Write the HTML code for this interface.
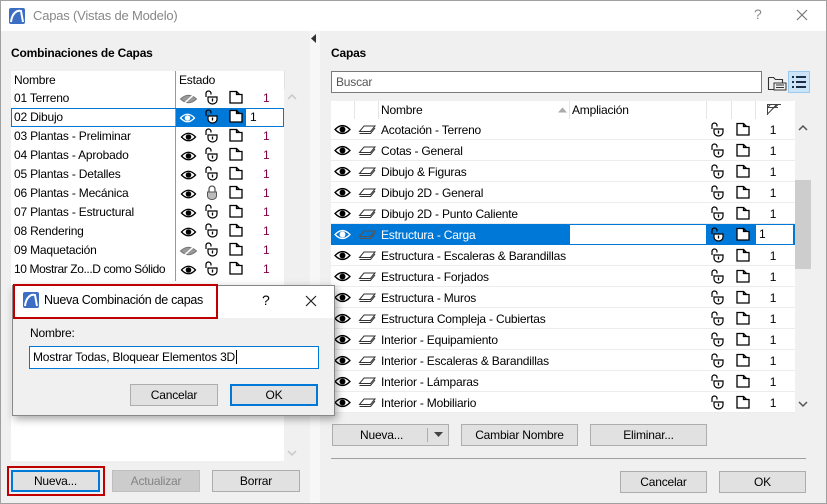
<!DOCTYPE html>
<html><head><meta charset="utf-8"><style>
*{box-sizing:border-box;margin:0;padding:0}
body{width:827px;height:504px;overflow:hidden;font-family:"Liberation Sans",sans-serif;font-size:12px;letter-spacing:-0.2px;color:#000;background:#f0f0f0;position:relative}
.a{position:absolute}
.win{left:0;top:0;width:827px;height:504px;border:1px solid #a0a0a0;background:#f0f0f0}
.title{left:1px;top:1px;width:825px;height:30px;background:#fff}
.btn{position:absolute;background:#e1e1e1;border:1px solid #adadad;text-align:center;line-height:20px;font-size:12px}
.row{position:absolute;height:19px;line-height:19px}
.rrow{position:absolute;left:331px;width:464px;height:21px;line-height:20px;border-bottom:1px solid #ececec;background:#fff}
.num{color:#800040}
svg.i{position:absolute}
</style></head><body>
<svg width="0" height="0" style="position:absolute">
<defs>
<symbol id="eye" viewBox="0 0 16 12"><path d="M1 6 Q8 -1.5 15 6 Q8 13.5 1 6Z" fill="none" stroke="currentColor" stroke-width="1.3"/><circle cx="8" cy="6" r="2.8" fill="currentColor"/></symbol>
<symbol id="eyeoff" viewBox="0 0 18 12"><path d="M1 6 Q9 -1.5 17 6 Q9 13.5 1 6Z" fill="#999" stroke="#777" stroke-width="1"/><path d="M4 11 L15 1" stroke="#fff" stroke-width="1.5"/></symbol>
<symbol id="lock" viewBox="0 0 16 16"><path d="M3 8 V4.5 a2.5 2.5 0 0 1 5 0 V5.5" fill="none" stroke="currentColor" stroke-width="1.2"/><path d="M5 8 h9 v3 a4.5 4 0 0 1 -9 0 z" fill="none" stroke="currentColor" stroke-width="1.2"/><path d="M9.5 9.5 v3" stroke="currentColor" stroke-width="1.3"/></symbol>
<symbol id="lockw" viewBox="0 0 16 16"><path d="M3 8 V4.5 a2.5 2.5 0 0 1 5 0 V5.5" fill="none" stroke="#000" stroke-width="1.2"/><path d="M5 8 h9 v3 a4.5 4 0 0 1 -9 0 z" fill="#fff" stroke="#000" stroke-width="1.2"/><path d="M9.5 9.5 v3" stroke="#000" stroke-width="1.3"/></symbol>
<symbol id="lockc" viewBox="0 0 16 16"><path d="M5 8 V5 a3 3 0 0 1 6 0 V8" fill="none" stroke="#555" stroke-width="1.3"/><path d="M3.5 8 h9 v4 a4.5 3.5 0 0 1 -9 0 z" fill="#bbb" stroke="#555" stroke-width="1"/></symbol>
<symbol id="fold" viewBox="0 0 16 16"><path d="M2 2.5 h6.5 v3 h5.5 v8.5 h-12 z M8.5 2.5 l3 3" fill="none" stroke="currentColor" stroke-width="1.3"/></symbol>
<symbol id="foldw" viewBox="0 0 16 16"><path d="M2 2.5 h6.5 v3 h5.5 v8.5 h-12 z" fill="#fff" stroke="#000" stroke-width="1.3"/><path d="M8.5 2.5 l3 3" fill="none" stroke="#000" stroke-width="1.3"/></symbol>
<symbol id="lay" viewBox="0 0 18 12"><path d="M1.5 7.5 L6 2 H17 L12.5 7.5 Z" fill="none" stroke="currentColor" stroke-width="1"/><path d="M1.5 9.5 H12.5 L17 4" fill="none" stroke="currentColor" stroke-width="1"/></symbol>
<symbol id="logo" viewBox="0 0 16 16"><rect width="16" height="16" rx="2" fill="#3c6fc4"/><path d="M2 14 C3 5 8 2 12 3 L14 14" fill="none" stroke="#fff" stroke-width="2"/></symbol>
</defs></svg>

<div class="a win"></div>
<div class="a title"></div>
<svg class="i" style="left:9px;top:8px" width="16" height="16"><use href="#logo"/></svg>
<div class="a" style="left:33px;top:8px;font-size:13px;color:#888">Capas (Vistas de Modelo)</div>
<div class="a" style="left:754px;top:6px;font-size:14px;color:#888">?</div>
<svg class="i" style="left:796px;top:9px" width="12" height="12"><path d="M1 1 L11 11 M11 1 L1 11" stroke="#777" stroke-width="1.2"/></svg>

<div class="a" style="left:310px;top:31px;width:10px;height:472px;background:#f7f7f7"></div>
<svg class="i" style="left:311px;top:34px" width="6" height="9"><path d="M5 0 L0 4.5 L5 9Z" fill="#333"/></svg>

<!-- LEFT -->
<div class="a" style="left:11px;top:46px;font-weight:bold">Combinaciones de Capas</div>
<div class="a" style="left:11px;top:71px;width:273px;height:390px;background:#fff"></div>
<div class="a" style="left:175px;top:71px;width:1px;height:210px;background:#999"></div>
<div class="a" style="left:284px;top:71px;width:1px;height:18px;background:#e0e0e0"></div>
<div class="a" style="left:14px;top:73px">Nombre</div>
<div class="a" style="left:179px;top:73px">Estado</div>
<svg class="i" style="left:287px;top:93px" width="10" height="7"><path d="M1 6 L5 2 L9 6" fill="none" stroke="#c8c8c8" stroke-width="1.5"/></svg>
<svg class="i" style="left:287px;top:450px" width="10" height="7"><path d="M1 1 L5 5 L9 1" fill="none" stroke="#c8c8c8" stroke-width="1.5"/></svg>

<div class="a" style="left:11px;top:108px;width:273px;height:19px;border:1px solid #0078d7"></div>
<div class="a" style="left:176px;top:109px;width:70px;height:17px;background:#0078d7"></div>

<div class="row" style="left:14px;top:89px">01 Terreno</div>
<div class="row" style="left:14px;top:108px">02 Dibujo</div>
<div class="row" style="left:14px;top:127px">03 Plantas - Preliminar</div>
<div class="row" style="left:14px;top:146px">04 Plantas - Aprobado</div>
<div class="row" style="left:14px;top:165px">05 Plantas - Detalles</div>
<div class="row" style="left:14px;top:184px">06 Plantas - Mecánica</div>
<div class="row" style="left:14px;top:203px">07 Plantas - Estructural</div>
<div class="row" style="left:14px;top:222px">08 Rendering</div>
<div class="row" style="left:14px;top:241px">09 Maquetación</div>
<div class="row" style="left:14px;top:260px;letter-spacing:-0.4px">10 Mostrar Zo...D como Sólido</div>

<svg class="i" style="left:179px;top:93px" width="19" height="12"><use href="#eyeoff"/></svg>
<svg class="i" style="left:179px;top:112px;color:#fff" width="17" height="12"><use href="#eye"/></svg>
<svg class="i" style="left:180px;top:131px;color:#000" width="17" height="12"><use href="#eye"/></svg>
<svg class="i" style="left:180px;top:150px;color:#000" width="17" height="12"><use href="#eye"/></svg>
<svg class="i" style="left:180px;top:169px;color:#000" width="17" height="12"><use href="#eye"/></svg>
<svg class="i" style="left:180px;top:188px;color:#000" width="17" height="12"><use href="#eye"/></svg>
<svg class="i" style="left:180px;top:207px;color:#000" width="17" height="12"><use href="#eye"/></svg>
<svg class="i" style="left:180px;top:226px;color:#000" width="17" height="12"><use href="#eye"/></svg>
<svg class="i" style="left:179px;top:245px" width="19" height="12"><use href="#eyeoff"/></svg>
<svg class="i" style="left:180px;top:264px;color:#000" width="17" height="12"><use href="#eye"/></svg>

<svg class="i" style="left:203px;top:89px;color:#000" width="16" height="16"><use href="#lock"/></svg>
<svg class="i" style="left:203px;top:108px" width="16" height="16"><use href="#lockw"/></svg>
<svg class="i" style="left:203px;top:127px;color:#000" width="16" height="16"><use href="#lock"/></svg>
<svg class="i" style="left:203px;top:146px;color:#000" width="16" height="16"><use href="#lock"/></svg>
<svg class="i" style="left:203px;top:165px;color:#000" width="16" height="16"><use href="#lock"/></svg>
<svg class="i" style="left:204px;top:184px" width="16" height="16"><use href="#lockc"/></svg>
<svg class="i" style="left:203px;top:203px;color:#000" width="16" height="16"><use href="#lock"/></svg>
<svg class="i" style="left:203px;top:222px;color:#000" width="16" height="16"><use href="#lock"/></svg>
<svg class="i" style="left:203px;top:241px;color:#000" width="16" height="16"><use href="#lock"/></svg>
<svg class="i" style="left:203px;top:260px;color:#000" width="16" height="16"><use href="#lock"/></svg>

<svg class="i" style="left:228px;top:89px;color:#000" width="16" height="16"><use href="#fold"/></svg>
<svg class="i" style="left:228px;top:108px" width="16" height="16"><use href="#foldw"/></svg>
<svg class="i" style="left:228px;top:127px;color:#000" width="16" height="16"><use href="#fold"/></svg>
<svg class="i" style="left:228px;top:146px;color:#000" width="16" height="16"><use href="#fold"/></svg>
<svg class="i" style="left:228px;top:165px;color:#000" width="16" height="16"><use href="#fold"/></svg>
<svg class="i" style="left:228px;top:184px;color:#000" width="16" height="16"><use href="#fold"/></svg>
<svg class="i" style="left:228px;top:203px;color:#000" width="16" height="16"><use href="#fold"/></svg>
<svg class="i" style="left:228px;top:222px;color:#000" width="16" height="16"><use href="#fold"/></svg>
<svg class="i" style="left:228px;top:241px;color:#000" width="16" height="16"><use href="#fold"/></svg>
<svg class="i" style="left:228px;top:260px;color:#000" width="16" height="16"><use href="#fold"/></svg>

<div class="row num" style="left:263px;top:89px">1</div>
<div class="row" style="left:250px;top:108px">1</div>
<div class="row num" style="left:263px;top:127px">1</div>
<div class="row num" style="left:263px;top:146px">1</div>
<div class="row num" style="left:263px;top:165px">1</div>
<div class="row num" style="left:263px;top:184px">1</div>
<div class="row num" style="left:263px;top:203px">1</div>
<div class="row num" style="left:263px;top:222px">1</div>
<div class="row num" style="left:263px;top:241px">1</div>
<div class="row num" style="left:263px;top:260px">1</div>

<div class="a" style="left:7px;top:466px;width:98px;height:30px;border:2px solid #c00000"></div>
<div class="btn" style="left:11px;top:470px;width:89px;height:22px;border:2px solid #0078d7;line-height:18px">Nueva...</div>
<div class="btn" style="left:112px;top:470px;width:88px;height:22px;background:#ccc;border-color:#bfbfbf;color:#838383">Actualizar</div>
<div class="btn" style="left:212px;top:470px;width:88px;height:22px">Borrar</div>

<!-- RIGHT -->
<div class="a" style="left:331px;top:46px;font-weight:bold">Capas</div>
<div class="a" style="left:331px;top:71px;width:431px;height:22px;background:#fff;border:1px solid #7a7a7a;padding-left:4px;line-height:20px;color:#555">Buscar</div>
<svg class="i" style="left:767px;top:74px" width="20" height="18"><path d="M1.5 3.5 h5 l2 2 h7 v3 M1.5 3.5 v12 h5" fill="none" stroke="#333" stroke-width="1.1"/><rect x="7" y="9" width="12" height="7" fill="none" stroke="#333"/><path d="M9 11 h8 M9 13.5 h8" stroke="#333"/></svg>
<div class="a" style="left:788px;top:71px;width:22px;height:22px;background:#cce4f7;border:1px solid #99c9ef"></div>
<svg class="i" style="left:791px;top:75px" width="16" height="14"><path d="M1 2h2M5 2h10M1 7h2M5 7h10M1 12h2M5 12h10" stroke="#1e2d44" stroke-width="2"/></svg>

<div class="a" style="left:331px;top:101px;width:464px;height:18px;background:#fff"></div>
<div class="a" style="left:354px;top:101px;width:1px;height:18px;background:#e5e5e5"></div>
<div class="a" style="left:378px;top:101px;width:1px;height:18px;background:#e5e5e5"></div>
<div class="a" style="left:569px;top:101px;width:1px;height:18px;background:#e5e5e5"></div>
<div class="a" style="left:706px;top:101px;width:1px;height:18px;background:#e5e5e5"></div>
<div class="a" style="left:731px;top:101px;width:1px;height:18px;background:#e5e5e5"></div>
<div class="a" style="left:755px;top:101px;width:1px;height:18px;background:#e5e5e5"></div>
<div class="a" style="left:381px;top:103px">Nombre</div>
<svg class="i" style="left:558px;top:107px" width="9" height="6"><path d="M0 5.5 L4.5 0.5 L9 5.5Z" fill="#aaa"/></svg>
<div class="a" style="left:572px;top:103px">Ampliación</div>
<svg class="i" style="left:766px;top:103px" width="16" height="13"><path d="M1.5 12 V1.5 H15 M1.5 4.5 H12 M1.5 4.5 L4.5 1.5 M4.5 8 L10.5 1.5 M9 4.5 L12 1.5 M1.5 11 L8 4.5" fill="none" stroke="#444" stroke-width="1"/></svg>

<div class="rrow" style="top:119px"></div>
<div class="rrow" style="top:140px"></div>
<div class="rrow" style="top:161px"></div>
<div class="rrow" style="top:182px"></div>
<div class="rrow" style="top:203px"></div>
<div class="rrow" style="top:224px;background:#0078d7;border-color:#0078d7"></div>
<div class="rrow" style="top:245px"></div>
<div class="rrow" style="top:266px"></div>
<div class="rrow" style="top:287px"></div>
<div class="rrow" style="top:308px"></div>
<div class="rrow" style="top:329px"></div>
<div class="rrow" style="top:350px"></div>
<div class="rrow" style="top:371px"></div>
<div class="rrow" style="top:392px"></div>
<div class="a" style="left:570px;top:225px;width:136px;height:19px;background:#fff"></div>
<div class="a" style="left:756px;top:225px;width:37px;height:19px;background:#fff"></div>
<div class="a" style="left:759px;top:225px;line-height:19px">1</div>

<div class="a" style="left:381px;top:120px;line-height:20px">
<div style="height:21px">Acotación - Terreno</div>
<div style="height:21px">Cotas - General</div>
<div style="height:21px">Dibujo &amp; Figuras</div>
<div style="height:21px">Dibujo 2D - General</div>
<div style="height:21px">Dibujo 2D - Punto Caliente</div>
<div style="height:21px;color:#fff">Estructura - Carga</div>
<div style="height:21px">Estructura - Escaleras &amp; Barandillas</div>
<div style="height:21px">Estructura - Forjados</div>
<div style="height:21px">Estructura - Muros</div>
<div style="height:21px">Estructura Compleja - Cubiertas</div>
<div style="height:21px">Interior - Equipamiento</div>
<div style="height:21px">Interior - Escaleras &amp; Barandillas</div>
<div style="height:21px">Interior - Lámparas</div>
<div style="height:21px">Interior - Mobiliario</div>
</div>
<div class="a" style="left:768px;top:120px;line-height:20px;text-align:center;width:10px">
<div style="height:21px">1</div><div style="height:21px">1</div><div style="height:21px">1</div><div style="height:21px">1</div><div style="height:21px">1</div><div style="height:21px"></div><div style="height:21px">1</div><div style="height:21px">1</div><div style="height:21px">1</div><div style="height:21px">1</div><div style="height:21px">1</div><div style="height:21px">1</div><div style="height:21px">1</div><div style="height:21px">1</div>
</div>

<div class="a" style="left:334px;top:123px;color:#000">
<svg width="17" height="13" style="display:block;margin-bottom:8px"><use href="#eye"/></svg>
<svg width="17" height="13" style="display:block;margin-bottom:8px"><use href="#eye"/></svg>
<svg width="17" height="13" style="display:block;margin-bottom:8px"><use href="#eye"/></svg>
<svg width="17" height="13" style="display:block;margin-bottom:8px"><use href="#eye"/></svg>
<svg width="17" height="13" style="display:block;margin-bottom:8px"><use href="#eye"/></svg>
<svg width="17" height="13" style="display:block;margin-bottom:8px;color:#fff"><use href="#eye"/></svg>
<svg width="17" height="13" style="display:block;margin-bottom:8px"><use href="#eye"/></svg>
<svg width="17" height="13" style="display:block;margin-bottom:8px"><use href="#eye"/></svg>
<svg width="17" height="13" style="display:block;margin-bottom:8px"><use href="#eye"/></svg>
<svg width="17" height="13" style="display:block;margin-bottom:8px"><use href="#eye"/></svg>
<svg width="17" height="13" style="display:block;margin-bottom:8px"><use href="#eye"/></svg>
<svg width="17" height="13" style="display:block;margin-bottom:8px"><use href="#eye"/></svg>
<svg width="17" height="13" style="display:block;margin-bottom:8px"><use href="#eye"/></svg>
<svg width="17" height="13" style="display:block;margin-bottom:8px"><use href="#eye"/></svg>
</div>
<div class="a" style="left:358px;top:124px;color:#333">
<svg width="18" height="12" style="display:block;margin-bottom:9px"><use href="#lay"/></svg>
<svg width="18" height="12" style="display:block;margin-bottom:9px"><use href="#lay"/></svg>
<svg width="18" height="12" style="display:block;margin-bottom:9px"><use href="#lay"/></svg>
<svg width="18" height="12" style="display:block;margin-bottom:9px"><use href="#lay"/></svg>
<svg width="18" height="12" style="display:block;margin-bottom:9px"><use href="#lay"/></svg>
<svg width="18" height="12" style="display:block;margin-bottom:9px;color:#555"><use href="#lay"/></svg>
<svg width="18" height="12" style="display:block;margin-bottom:9px"><use href="#lay"/></svg>
<svg width="18" height="12" style="display:block;margin-bottom:9px"><use href="#lay"/></svg>
<svg width="18" height="12" style="display:block;margin-bottom:9px"><use href="#lay"/></svg>
<svg width="18" height="12" style="display:block;margin-bottom:9px"><use href="#lay"/></svg>
<svg width="18" height="12" style="display:block;margin-bottom:9px"><use href="#lay"/></svg>
<svg width="18" height="12" style="display:block;margin-bottom:9px"><use href="#lay"/></svg>
<svg width="18" height="12" style="display:block;margin-bottom:9px"><use href="#lay"/></svg>
<svg width="18" height="12" style="display:block;margin-bottom:9px"><use href="#lay"/></svg>
</div>
<div class="a" style="left:709px;top:121px;color:#000">
<svg width="16" height="16" style="display:block;margin-bottom:5px"><use href="#lock"/></svg>
<svg width="16" height="16" style="display:block;margin-bottom:5px"><use href="#lock"/></svg>
<svg width="16" height="16" style="display:block;margin-bottom:5px"><use href="#lock"/></svg>
<svg width="16" height="16" style="display:block;margin-bottom:5px"><use href="#lock"/></svg>
<svg width="16" height="16" style="display:block;margin-bottom:5px"><use href="#lock"/></svg>
<svg width="16" height="16" style="display:block;margin-bottom:5px"><use href="#lockw"/></svg>
<svg width="16" height="16" style="display:block;margin-bottom:5px"><use href="#lock"/></svg>
<svg width="16" height="16" style="display:block;margin-bottom:5px"><use href="#lock"/></svg>
<svg width="16" height="16" style="display:block;margin-bottom:5px"><use href="#lock"/></svg>
<svg width="16" height="16" style="display:block;margin-bottom:5px"><use href="#lock"/></svg>
<svg width="16" height="16" style="display:block;margin-bottom:5px"><use href="#lock"/></svg>
<svg width="16" height="16" style="display:block;margin-bottom:5px"><use href="#lock"/></svg>
<svg width="16" height="16" style="display:block;margin-bottom:5px"><use href="#lock"/></svg>
<svg width="16" height="16" style="display:block;margin-bottom:5px"><use href="#lock"/></svg>
</div>
<div class="a" style="left:735px;top:121px;color:#000">
<svg width="16" height="16" style="display:block;margin-bottom:5px"><use href="#fold"/></svg>
<svg width="16" height="16" style="display:block;margin-bottom:5px"><use href="#fold"/></svg>
<svg width="16" height="16" style="display:block;margin-bottom:5px"><use href="#fold"/></svg>
<svg width="16" height="16" style="display:block;margin-bottom:5px"><use href="#fold"/></svg>
<svg width="16" height="16" style="display:block;margin-bottom:5px"><use href="#fold"/></svg>
<svg width="16" height="16" style="display:block;margin-bottom:5px"><use href="#foldw"/></svg>
<svg width="16" height="16" style="display:block;margin-bottom:5px"><use href="#fold"/></svg>
<svg width="16" height="16" style="display:block;margin-bottom:5px"><use href="#fold"/></svg>
<svg width="16" height="16" style="display:block;margin-bottom:5px"><use href="#fold"/></svg>
<svg width="16" height="16" style="display:block;margin-bottom:5px"><use href="#fold"/></svg>
<svg width="16" height="16" style="display:block;margin-bottom:5px"><use href="#fold"/></svg>
<svg width="16" height="16" style="display:block;margin-bottom:5px"><use href="#fold"/></svg>
<svg width="16" height="16" style="display:block;margin-bottom:5px"><use href="#fold"/></svg>
<svg width="16" height="16" style="display:block;margin-bottom:5px"><use href="#fold"/></svg>
</div>

<div class="a" style="left:795px;top:180px;width:16px;height:89px;background:#cdcdcd"></div>
<svg class="i" style="left:798px;top:124px" width="10" height="7"><path d="M1 6 L5 2 L9 6" fill="none" stroke="#555" stroke-width="1.5"/></svg>
<svg class="i" style="left:798px;top:401px" width="10" height="7"><path d="M1 1 L5 5 L9 1" fill="none" stroke="#555" stroke-width="1.5"/></svg>

<div class="btn" style="left:332px;top:424px;width:117px;height:22px;text-align:left;padding-left:27px">Nueva...</div>
<div class="a" style="left:427px;top:428px;width:1px;height:14px;background:#adadad"></div>
<svg class="i" style="left:434px;top:432px" width="9" height="5"><path d="M0 0 H9 L4.5 5Z" fill="#444"/></svg>
<div class="btn" style="left:461px;top:424px;width:117px;height:22px">Cambiar Nombre</div>
<div class="btn" style="left:590px;top:424px;width:117px;height:22px">Eliminar...</div>
<div class="a" style="left:331px;top:458px;width:475px;height:1px;background:#a0a0a0"></div>
<div class="btn" style="left:620px;top:471px;width:87px;height:22px">Cancelar</div>
<div class="btn" style="left:719px;top:471px;width:87px;height:22px">OK</div>

<!-- DIALOG -->
<div class="a" style="left:12px;top:285px;width:323px;height:131px;background:#f0f0f0;border:1px solid #888;box-shadow:2px 3px 8px rgba(0,0,0,.35)"></div>
<div class="a" style="left:13px;top:286px;width:321px;height:32px;background:#fff"></div>
<div class="a" style="left:13px;top:284px;width:205px;height:35px;border:2px solid #c00000"></div>
<svg class="i" style="left:23px;top:292px" width="16" height="16"><use href="#logo"/></svg>
<div class="a" style="left:44px;top:293px;font-size:12.5px;letter-spacing:-0.3px">Nueva Combinación de capas</div>
<div class="a" style="left:262px;top:292px;font-size:14px">?</div>
<svg class="i" style="left:305px;top:295px" width="12" height="12"><path d="M1 1 L11 11 M11 1 L1 11" stroke="#222" stroke-width="1.2"/></svg>
<div class="a" style="left:30px;top:326px">Nombre:</div>
<div class="a" style="left:29px;top:346px;width:290px;height:23px;background:#fff;border:1px solid #0078d7;padding-left:3px;line-height:21px">Mostrar Todas, Bloquear Elementos 3D<span style="border-left:1px solid #000;margin-left:1px"></span></div>
<div class="btn" style="left:130px;top:384px;width:88px;height:22px">Cancelar</div>
<div class="btn" style="left:230px;top:384px;width:88px;height:22px;border:2px solid #0078d7;line-height:18px">OK</div>
</body></html>
